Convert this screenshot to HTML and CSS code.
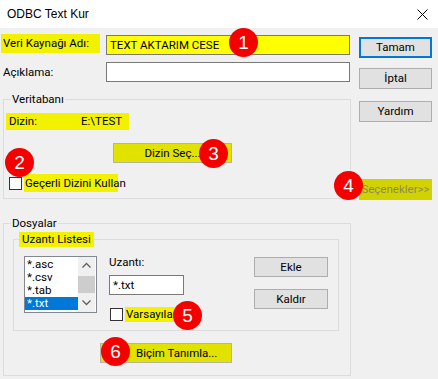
FILE: index.html
```html
<!DOCTYPE html>
<html lang="tr">
<head>
    <meta charset="UTF-8">
    <title>ODBC Text Kur</title>
    <link rel="stylesheet" href="styles.css">
</head>
<body>
    <div class="titlebar">
        <span>ODBC Text Kur</span>
        <svg class="close" width="11" height="11" viewBox="0 0 11 11">
            <path d="M0.5 0.5 L10.5 10.5 M10.5 0.5 L0.5 10.5" stroke="#000" stroke-width="1" fill="none"/>
        </svg>
    </div>

    <div class="dialog">
        <div class="main">
            <div class="field-row first">
                <span class="hl row-label">Veri Kaynağı Adı:</span>
                <div class="textbox yellow">TEXT AKTARIM CESE</div>
            </div>
            <div class="field-row second">
                <span class="row-label plain">Açıklama:</span>
                <div class="textbox"></div>
            </div>

            <fieldset class="group db-group">
                <legend>Veritabanı</legend>
                <div class="db-body">
                    <div class="hl dir-line"><span class="dir-key">Dizin:</span><span>E:\TEST</span></div>
                    <div class="btn yellow-btn dir-btn">Dizin Seç...</div>
                    <div class="check-row current-dir">
                        <span class="checkbox"></span>
                        <span class="hl check-label">Geçerli Dizini Kullan</span>
                    </div>
                </div>
            </fieldset>

            <fieldset class="group files-group">
                <legend>Dosyalar</legend>
                <div class="files-body">
                    <fieldset class="group ext-group">
                        <legend class="hl">Uzantı Listesi</legend>
                        <div class="ext-body">
                            <div class="listbox">
                                <ul class="items">
                                    <li>*.asc</li>
                                    <li>*.csv</li>
                                    <li>*.tab</li>
                                    <li class="selected">*.txt</li>
                                </ul>
                                <div class="scrollbar">
                                    <svg width="17" height="17" viewBox="0 0 17 17"><path d="M4.5 10.5 L8.5 6.5 L12.5 10.5" stroke="#606060" stroke-width="1.3" fill="none"/></svg>
                                    <div class="thumb"></div>
                                    <svg width="17" height="17" viewBox="0 0 17 17"><path d="M4.5 5.5 L8.5 9.5 L12.5 5.5" stroke="#606060" stroke-width="1.3" fill="none"/></svg>
                                </div>
                            </div>
                            <div class="ext-col">
                                <span class="ext-label">Uzantı:</span>
                                <div class="textbox ext-box">*.txt</div>
                                <div class="check-row default-row">
                                    <span class="checkbox"></span>
                                    <span class="hl check-label small">Varsayılan</span>
                                </div>
                            </div>
                            <div class="ext-buttons">
                                <div class="btn">Ekle</div>
                                <div class="btn">Kaldır</div>
                            </div>
                        </div>
                    </fieldset>
                    <div class="btn yellow-btn format-btn">Biçim Tanımla...</div>
                </div>
            </fieldset>
        </div>

        <div class="side">
            <div class="btn default">Tamam</div>
            <div class="btn cancel">İptal</div>
            <div class="btn help">Yardım</div>
            <div class="btn options">Seçenekler&gt;&gt;</div>
        </div>
    </div>

    <!-- numbered callouts -->
    <span class="badge b1">1</span>
    <span class="badge b2">2</span>
    <span class="badge b3">3</span>
    <span class="badge b4">4</span>
    <span class="badge b5">5</span>
    <span class="badge b6">6</span>
</body>
</html>
```

FILE: styles.css
```css
* {
    box-sizing: border-box;
}

body {
    margin: 0;
    width: 438px;
    height: 379px;
    overflow: hidden;
    position: relative;
    background: #f0f0f0;
    color: #000;
    font-family: Roboto, "Liberation Sans", Arial, sans-serif;
    font-size: 11.5px;
}

.titlebar {
    height: 28px;
    background: #fff;
    display: flex;
    align-items: center;
    justify-content: space-between;
    padding: 0 10px 0 7px;
    font-family: "Liberation Sans", Arial, sans-serif;
    font-size: 12px;
}

.dialog {
    display: flex;
}

.main {
    width: 350px;
    margin-left: 1px;
    padding-top: 6px;
}

.side {
    width: 73px;
    margin-left: 8px;
    padding-top: 9px;
    display: flex;
    flex-direction: column;
}

/* highlight marker */
.hl {
    background: #f2f200;
}

.field-row {
    display: grid;
    grid-template-columns: 99px 244px;
    column-gap: 6px;
    align-items: start;
}

.field-row.second {
    margin-top: 7px;
}

.row-label {
    height: 19px;
    line-height: 19px;
    padding-left: 2px;
}

.row-label.plain {
    height: 20px;
    line-height: 20px;
}

.textbox {
    height: 20px;
    line-height: 18px;
    padding-left: 3px;
    background: #fff;
    border: 1px solid #7a7a7a;
}

.first .textbox {
    margin-top: 1px;
}

.textbox.yellow {
    background: #ffff00;
}

/* group boxes */
.group {
    margin: 0;
    padding: 0;
    min-inline-size: auto;
    border: 1px solid #dcdcdc;
}

.group legend {
    padding: 0 1px;
    margin-left: 7px;
    line-height: 16px;
}

.db-group,
.files-group {
    width: 348px;
    margin-left: 2px;
}

.db-group {
    margin-top: 9px;
}

.files-group {
    margin-top: 16px;
}

.db-body {
    padding: 6px 0 6px 2px;
}

.dir-line {
    display: flex;
    width: 123px;
    height: 17px;
    line-height: 17px;
    padding-left: 3px;
}

.dir-key {
    width: 72px;
}

.btn {
    height: 21px;
    line-height: 19px;
    text-align: center;
    background: #e1e1e1;
    border: 1px solid #adadad;
}

.yellow-btn {
    background: #e2e200;
    border-color: #b4b4a0;
}

.dir-btn {
    width: 119px;
    height: 20px;
    line-height: 18px;
    margin: 13px 0 0 107px;
}

.check-row {
    display: flex;
    align-items: center;
}

.checkbox {
    width: 13px;
    height: 13px;
    background: #fff;
    border: 1px solid #333;
}

.check-label {
    width: 94px;
    margin-left: 2px;
    height: 18px;
    line-height: 18px;
    padding: 0 0 0 1px;
    white-space: nowrap;
}

.current-dir {
    margin: 11px 0 0 3px;
}

.files-body {
    padding: 1px 0 12px 9px;
}

.ext-group {
    width: 326px;
}

.ext-group legend {
    margin-left: 5px;
    padding: 0 3px;
    line-height: 15px;
}

.ext-body {
    height: 83px;
    padding-top: 9px;
    display: flex;
    align-items: flex-start;
}

.listbox {
    margin-left: 10px;
    width: 73px;
    height: 57px;
    background: #fff;
    border: 1px solid #828790;
    display: flex;
}

.items {
    list-style: none;
    margin: 0;
    padding: 1px 0 0;
    width: 53px;
}

.items li {
    height: 13px;
    line-height: 13px;
    padding-left: 2px;
}

.items li.selected {
    background: #0078d7;
    color: #fff;
}

.scrollbar {
    width: 17px;
    background: #f0f0f0;
    display: flex;
    flex-direction: column;
}

.scrollbar svg {
    display: block;
}

.thumb {
    height: 17px;
    margin: 2px 0 auto;
    background: #cdcdcd;
}

.ext-col {
    width: 75px;
    margin-left: 12px;
    display: flex;
    flex-direction: column;
}

.ext-label {
    margin-top: -1px;
    height: 15px;
    line-height: 15px;
}

.ext-box {
    margin-top: 5px;
    width: 75px;
}

.default-row {
    margin-top: 12px;
    margin-left: 1px;
}

.check-label.small {
    width: 51px;
    height: 15px;
    line-height: 15px;
}

.ext-buttons {
    margin-left: auto;
    margin-right: 10px;
    padding-top: 1px;
    width: 74px;
    display: flex;
    flex-direction: column;
    gap: 12px;
}

.ext-buttons .btn {
    height: 20px;
    line-height: 18px;
}

.format-btn {
    width: 132px;
    height: 20px;
    line-height: 18px;
    margin: 12px 0 0 87px;
    text-align: left;
    padding-left: 35px;
}

.side .default {
    border: 2px solid #0078d7;
    line-height: 17px;
}

.side .cancel {
    margin-top: 10px;
}

.side .help {
    margin-top: 12px;
}

.side .options {
    margin-top: 57px;
    background: #d2d200;
    border: none;
    line-height: 21px;
    color: #8a8a5c;
}

/* numbered callouts over the dialog */
.badge {
    position: absolute;
    width: 29px;
    height: 29px;
    margin: -14px 0 0 -14px;
    border-radius: 50%;
    background: #f40000;
    color: #fff;
    font-family: "Liberation Sans", Arial, sans-serif;
    font-size: 19px;
    line-height: 29px;
    text-align: center;
}

.b1 { left: 243px; top: 42px; }
.b2 { left: 19px; top: 162px; }
.b3 { left: 213px; top: 153px; }
.b4 { left: 348px; top: 185px; }
.b5 { left: 187px; top: 315px; }
.b6 { left: 115px; top: 351px; }
```
